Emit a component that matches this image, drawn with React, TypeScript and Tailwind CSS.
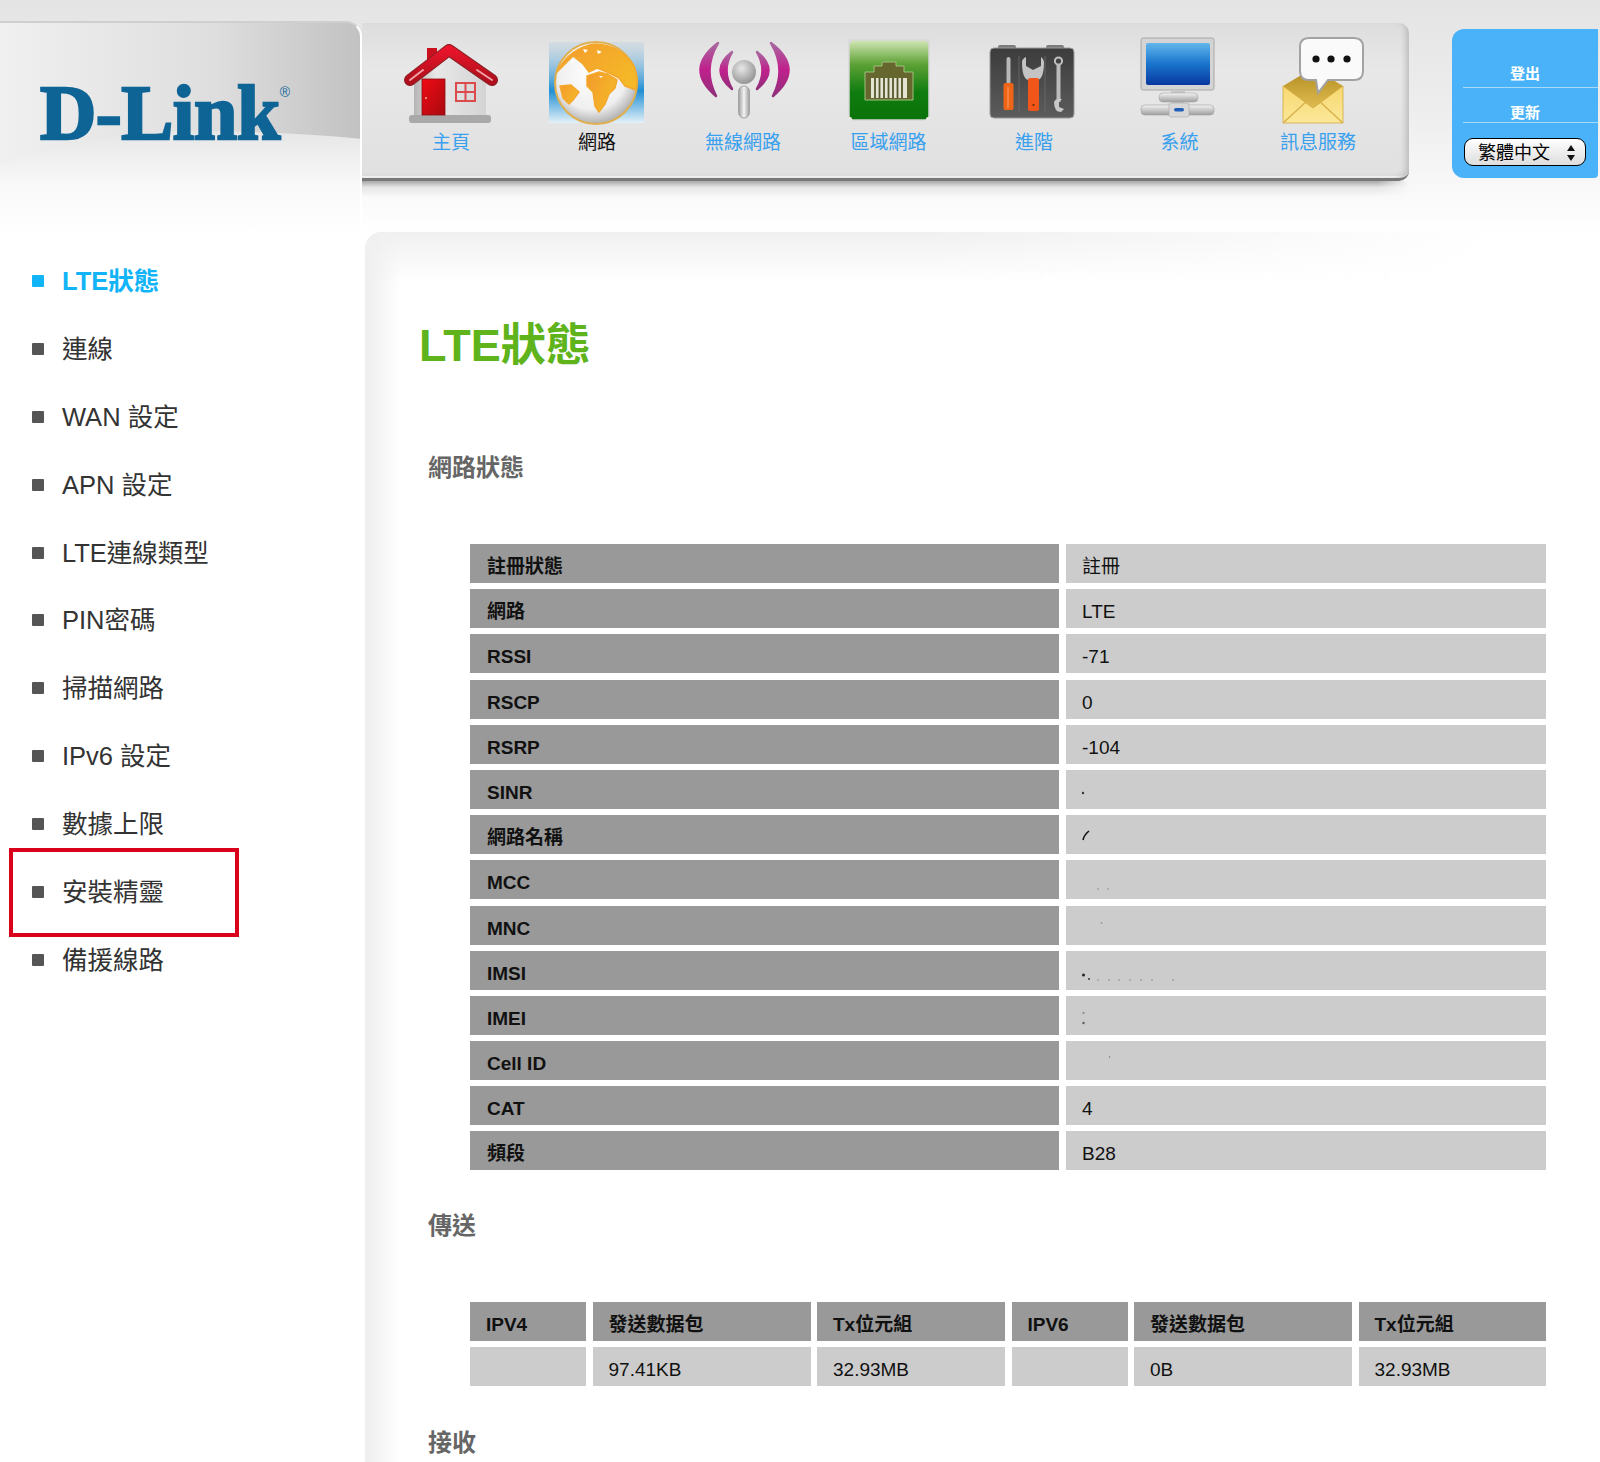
const navItems = [
  { label: "主頁", width: "w-[146px]", icon: <HomeIcon /> },
  { label: "網路", width: "w-[146px]", icon: <GlobeIcon />, active: true },
  { label: "無線網路", width: "w-[146px]", icon: <WirelessIcon /> },
  { label: "區域網路", width: "w-[145px]", icon: <LanIcon /> },
  { label: "進階", width: "w-[146px]", icon: <ToolsIcon /> },
  { label: "系統", width: "w-[145px]", icon: <MonitorIcon /> },
  { label: "訊息服務", width: "w-[132px]", icon: <MessageIcon /> },
];

const sideItems = [
  "LTE狀態",
  "連線",
  "WAN 設定",
  "APN 設定",
  "LTE連線類型",
  "PIN密碼",
  "掃描網路",
  "IPv6 設定",
  "數據上限",
  "安裝精靈",
  "備援線路",
];

// marks are the leftovers of the blurred values: x, y, radius, opacity
type Mark = [number, number, number, number];

const statusRows: { name: string; value?: string; marks?: Mark[]; slash?: boolean }[] = [
  { name: "註冊狀態", value: "註冊" },
  { name: "網路", value: "LTE" },
  { name: "RSSI", value: "-71" },
  { name: "RSCP", value: "0" },
  { name: "RSRP", value: "-104" },
  { name: "SINR", marks: [[17, 23, 1.2, 0.8]] },
  { name: "網路名稱", slash: true },
  { name: "MCC", marks: [[32, 29, 1, 0.2], [42, 29, 1, 0.2]] },
  { name: "MNC", marks: [[35.5, 17, 0.8, 0.4]] },
  {
    name: "IMSI",
    marks: [
      [17.5, 24, 1.5, 0.9],
      [23, 28, 1, 0.8],
      [32, 29, 1, 0.2],
      [43, 29, 1, 0.2],
      [53, 29, 1, 0.2],
      [64, 29, 1, 0.2],
      [75, 29, 1, 0.2],
      [86, 29, 1, 0.2],
      [107, 29, 1, 0.2],
    ],
  },
  { name: "IMEI", marks: [[17.5, 17, 1, 0.4], [17.5, 27, 1.2, 0.6]] },
  { name: "Cell ID", marks: [[43.6, 16, 0.7, 0.5]] },
  { name: "CAT", value: "4" },
  { name: "頻段", value: "B28" },
];

const sendHead = ["IPV4", "發送數据包", "Tx位元組", "IPV6", "發送數据包", "Tx位元組"];
const sendRow = ["", "97.41KB", "32.93MB", "", "0B", "32.93MB"];

function HomeIcon() {
  return (
    <svg className="blur-[0.4px]" width="100" height="90" viewBox="0 0 100 90">
      <defs>
        <linearGradient id="wall" x1="0" y1="0" x2="1" y2="0">
          <stop offset="0" stopColor="#b4b4b4" />
          <stop offset="0.3" stopColor="#e8e8e8" />
          <stop offset="1" stopColor="#d4d4d4" />
        </linearGradient>
        <linearGradient id="roof" x1="0" y1="0" x2="0" y2="1">
          <stop offset="0" stopColor="#e8142a" />
          <stop offset="1" stopColor="#b0101c" />
        </linearGradient>
        <linearGradient id="door" x1="0" y1="0" x2="1" y2="1">
          <stop offset="0" stopColor="#f00a14" />
          <stop offset="1" stopColor="#a80a10" />
        </linearGradient>
      </defs>
      <path d="M13 44 L48 14 L85 44 V82 H13 Z" fill="url(#wall)" />
      <rect x="26" y="12" width="10" height="16" fill="#c8101e" />
      <rect x="8" y="79" width="82" height="8" rx="3" fill="#a9a9a9" />
      <path d="M9 44 L48 14 L91 44" fill="none" stroke="#8c2026" strokeWidth="12" strokeLinecap="round" strokeLinejoin="round" />
      <path d="M9 44 L48 14 L91 44" fill="none" stroke="url(#roof)" strokeWidth="10" strokeLinecap="round" strokeLinejoin="round" />
      <path d="M9 44 L22 34 M76 34 L91 44" stroke="#f0a0a4" strokeWidth="2" strokeLinecap="round" />
      <rect x="21" y="43" width="23" height="36" fill="url(#door)" stroke="#8c0e14" strokeWidth="0.8" />
      <circle cx="25" cy="62" r="1" fill="#f6b0a0" />
      <rect x="55" y="47" width="19" height="18" fill="none" stroke="#dc4a4e" strokeWidth="2" />
      <path d="M64.5 47 V65 M55 56 H74" stroke="#dc4a4e" strokeWidth="2" />
    </svg>
  );
}

function GlobeIcon() {
  return (
    <svg className="blur-[0.5px]" width="100" height="90" viewBox="0 0 100 90">
      <defs>
        <linearGradient id="glow" x1="0" y1="0" x2="0" y2="1">
          <stop offset="0" stopColor="#9cc4e0" stopOpacity="0.2" />
          <stop offset="0.6" stopColor="#1f8fd4" />
          <stop offset="1" stopColor="#e4f1f8" />
        </linearGradient>
        <radialGradient id="ball" cx="0.45" cy="0.4" r="0.65">
          <stop offset="0" stopColor="#ffffff" />
          <stop offset="0.65" stopColor="#efefef" />
          <stop offset="1" stopColor="#a0a0a0" />
        </radialGradient>
        <linearGradient id="land" x1="0" y1="0" x2="1" y2="0.6">
          <stop offset="0" stopColor="#f39a2c" />
          <stop offset="1" stopColor="#f5b828" />
        </linearGradient>
      </defs>
      <rect x="2" y="6" width="95" height="81" fill="url(#glow)" />
      <circle cx="49" cy="47" r="41" fill="url(#ball)" stroke="#e0b050" strokeWidth="2" />
      <g fill="url(#land)" stroke="#f5a82c" strokeWidth="1.5" strokeLinejoin="round">
        <path d="M10 36 Q22 12 48 8 Q74 9 87 30 Q92 44 89 54 L78 50 L72 42 L60 36 L50 32 L42 36 L36 28 L26 20 L16 30 Z" />
        <path d="M40 40 L52 36 L60 38 L70 44 L68 52 L62 58 L58 68 L52 76 L48 70 L46 56 L40 50 Z" />
        <path d="M13 50 L24 49 L32 56 L26 64 L22 68 L16 62 Z" />
      </g>
      <path d="M36 13 l5 1 l-3 3 Z M24 24 l4 1 l-3 3 Z M50 14 l5 2 l-4 2 Z M52 40 l4 0 l-2 2 Z" fill="#fff" />
    </svg>
  );
}

function WirelessIcon() {
  return (
    <svg className="blur-[0.4px]" width="100" height="90" viewBox="0 0 100 90">
      <defs>
        <radialGradient id="bulb" cx="0.4" cy="0.35" r="0.7">
          <stop offset="0" stopColor="#e8e8e8" />
          <stop offset="1" stopColor="#8f8f8f" />
        </radialGradient>
        <linearGradient id="stem" x1="0" y1="0" x2="1" y2="0">
          <stop offset="0" stopColor="#9a9a9a" />
          <stop offset="0.5" stopColor="#f4f4f4" />
          <stop offset="1" stopColor="#9a9a9a" />
        </linearGradient>
        <linearGradient id="wave" x1="0" y1="0" x2="0" y2="1">
          <stop offset="0" stopColor="#a86aa0" />
          <stop offset="0.5" stopColor="#c0208c" />
          <stop offset="1" stopColor="#90307a" />
        </linearGradient>
      </defs>
      <g fill="url(#wave)" stroke="url(#wave)" strokeWidth="2.5" strokeLinejoin="round">
        <path d="M25 7 Q-9 33 23 60 Q9 33 25 7 Z" />
        <path d="M78 7 Q112 33 80 60 Q94 33 78 7 Z" />
        <path d="M39 16 Q16 34 39 53 Q28 34 39 16 Z" />
        <path d="M64 16 Q87 34 64 53 Q75 34 64 16 Z" />
      </g>
      <circle cx="51" cy="36" r="12" fill="url(#bulb)" />
      <rect x="45.5" y="50" width="11" height="32" rx="5.5" fill="url(#stem)" stroke="#a4a4a4" />
    </svg>
  );
}

function LanIcon() {
  return (
    <svg className="blur-[0.4px]" width="100" height="90" viewBox="0 0 100 90">
      <defs>
        <linearGradient id="lanBg" x1="0" y1="0" x2="0" y2="1">
          <stop offset="0" stopColor="#d4e8b8" />
          <stop offset="0.3" stopColor="#5ea236" />
          <stop offset="0.65" stopColor="#0f7c10" />
          <stop offset="1" stopColor="#0a7208" />
        </linearGradient>
      </defs>
      <rect x="10" y="4" width="80" height="80" rx="4" fill="url(#lanBg)" stroke="#d8d8d8" strokeWidth="1.5" />
      <path d="M26 64 V36 H35 V30 H43 V26 H57 V30 H65 V36 H74 V64 Z" fill="#66672e" stroke="#9fc27c" strokeWidth="1" />
      <rect x="32" y="42" width="36" height="20" fill="#e4e4d2" />
      <path d="M36 42 V62 M40.5 42 V62 M45 42 V62 M49.5 42 V62 M54 42 V62 M58.5 42 V62 M63 42 V62" stroke="#55562a" strokeWidth="1.8" />
      <circle cx="11" cy="5" r="2" fill="#d8d8d8" />
      <circle cx="89" cy="5" r="2" fill="#d8d8d8" />
      <circle cx="11" cy="83" r="2" fill="#e8e8e8" />
      <circle cx="89" cy="83" r="2" fill="#e8e8e8" />
    </svg>
  );
}

function ToolsIcon() {
  return (
    <svg className="blur-[0.4px]" width="100" height="90" viewBox="0 0 100 90">
      <defs>
        <linearGradient id="case" x1="0" y1="0" x2="0" y2="1">
          <stop offset="0" stopColor="#3c3c3c" />
          <stop offset="1" stopColor="#5c5c5c" />
        </linearGradient>
      </defs>
      <rect x="14" y="9" width="18" height="5" rx="2" fill="#7c7c7c" />
      <rect x="62" y="9" width="18" height="5" rx="2" fill="#7c7c7c" />
      <rect x="6" y="12" width="84" height="70" rx="4" fill="url(#case)" stroke="#9a9a9a" strokeWidth="1" />
      <path d="M35 20 V76 M61 20 V76" stroke="#6c6c6c" strokeWidth="0.8" />
      <rect x="22.5" y="21" width="4" height="27" rx="2" fill="#b8b8b8" />
      <rect x="19.5" y="47" width="10" height="27" rx="2" fill="#f06418" />
      <path d="M24 51 V72" stroke="#ffa060" strokeWidth="1" />
      <path d="M38 26 Q38 42 44 44 H54 Q60 42 60 26 Q60 23 57 21 V30 L49 34 L42 30 V21 Q38 23 38 26 Z" fill="#c4c4c4" />
      <rect x="44" y="42" width="11" height="33" rx="2" fill="#f0561a" />
      <circle cx="49.5" cy="69" r="1" fill="#5a2608" />
      <circle cx="74.5" cy="25" r="3.6" fill="none" stroke="#c0c0c0" strokeWidth="2" />
      <rect x="72.5" y="28" width="4" height="38" fill="#bcbcbc" />
      <path d="M70 66 Q70 76 77 76 L80 73 L75 71 L75 66 L78 63 Q72 62 70 66 Z" fill="#c8c8c8" />
    </svg>
  );
}

function MonitorIcon() {
  return (
    <svg className="blur-[0.4px]" width="100" height="90" viewBox="0 0 100 90">
      <defs>
        <linearGradient id="screen" x1="0" y1="0" x2="0" y2="1">
          <stop offset="0" stopColor="#62b6ec" />
          <stop offset="0.5" stopColor="#1a74cc" />
          <stop offset="1" stopColor="#0838a0" />
        </linearGradient>
        <linearGradient id="metal" x1="0" y1="0" x2="0" y2="1">
          <stop offset="0" stopColor="#f4f4f4" />
          <stop offset="1" stopColor="#9e9e9e" />
        </linearGradient>
      </defs>
      <rect x="11" y="2" width="73" height="52" rx="2" fill="#d4d4d4" stroke="#a8a8a8" />
      <rect x="16" y="7" width="64" height="42" rx="2" fill="url(#screen)" />
      <rect x="41" y="54" width="14" height="4" fill="#c8c8c8" />
      <rect x="29" y="57" width="39" height="9" rx="4" fill="url(#metal)" stroke="#a8a8a8" strokeWidth="0.6" />
      <rect x="42" y="66" width="12" height="4" fill="#bbb" />
      <rect x="11" y="69" width="73" height="10" rx="4" fill="url(#metal)" stroke="#a0a0a0" strokeWidth="0.6" />
      <rect x="39" y="67" width="20" height="14" rx="2" fill="#d8d8d8" stroke="#a8a8a8" strokeWidth="0.6" />
      <rect x="44" y="72" width="10" height="3.5" rx="1.7" fill="#1f5fb8" />
    </svg>
  );
}

function MessageIcon() {
  return (
    <svg className="blur-[0.4px]" width="100" height="90" viewBox="0 0 100 90">
      <defs>
        <linearGradient id="flap" x1="0" y1="0" x2="0" y2="1">
          <stop offset="0" stopColor="#b08a20" />
          <stop offset="1" stopColor="#f2cf62" />
        </linearGradient>
        <linearGradient id="env" x1="0" y1="0" x2="0" y2="1">
          <stop offset="0" stopColor="#f8d870" />
          <stop offset="1" stopColor="#fbe89a" />
        </linearGradient>
      </defs>
      <path d="M15 50 L45 32 L75 50 V87 H15 Z" fill="url(#flap)" />
      <path d="M15 50 L45 72 L75 50 V87 H15 Z" fill="url(#env)" stroke="#d2aa40" strokeWidth="0.8" />
      <path d="M15 87 L40 64 M75 87 L50 64" stroke="#d8b24c" strokeWidth="1.5" />
      <path d="M41 2 H86 Q95 2 95 11 V35 Q95 44 86 44 H60 L50 57 L48 44 H41 Q32 44 32 35 V11 Q32 2 41 2 Z" fill="#fafafa" stroke="#a2a2a2" strokeWidth="2" />
      <circle cx="48" cy="23" r="3.6" fill="#111" />
      <circle cx="63" cy="23" r="3.6" fill="#111" />
      <circle cx="79" cy="23" r="3.6" fill="#111" />
    </svg>
  );
}

function Logo() {
  return (
    <div className="relative z-10 ml-[40px] flex items-start pt-[51px] font-['Liberation_Serif','DejaVu_Serif',serif] text-[78px] leading-[78px] font-bold tracking-[-0.5px] text-[#0f6496] [-webkit-text-stroke:2.4px_#0f6496]">
      <span>D-Link</span>
      <span className="mt-[10px] font-['Liberation_Sans',sans-serif] text-[14px] leading-[16px] font-normal tracking-normal [-webkit-text-stroke:0px]">
        ®
      </span>
    </div>
  );
}

export default function App() {
  return (
    <div className="h-[1462px] w-[1600px] overflow-hidden bg-white font-['Liberation_Sans','Noto_Sans_CJK_TC',sans-serif]">
      <header className="flex h-[232px] bg-gradient-to-b from-[#e4e4e4] via-[#eeeeee] via-50% to-white">
        <div className="relative mt-[21px] h-[211px] w-[362px] overflow-hidden rounded-tr-[16px] border-t-2 border-r-2 border-t-[#cfcfcf] border-r-white bg-gradient-to-r from-[#f0f0f0] via-[#dedede] via-60% to-[#c2c2c2]">
          <svg className="absolute inset-0" width="362" height="211" viewBox="0 0 362 211">
            <defs>
              <linearGradient id="swoosh" x1="0" y1="0" x2="0" y2="1">
                <stop offset="0" stopColor="#e6e6e6" />
                <stop offset="0.5" stopColor="#f8f8f8" />
                <stop offset="1" stopColor="#ffffff" />
              </linearGradient>
            </defs>
            <path d="M0 142 Q110 104 220 108 Q300 110 362 116 V211 H0 Z" fill="url(#swoosh)" />
          </svg>
          <Logo />
        </div>

        <div className="w-[1047px]">
          <nav className="mt-[23px] flex h-[158px] rounded-r-[10px] border-b-[3px] border-b-[#787878] bg-gradient-to-b from-[#dddddd] via-[#e8e8e8] via-30% to-[#e0e0e0] pl-[16px] pt-[13px] shadow-[inset_-6px_-2px_6px_-3px_#bbbbbb,inset_0_-2px_0_#ffffff]">
            {navItems.map((item) => (
              <div key={item.label} className={`flex flex-col items-center ${item.width}`}>
                {item.icon}
                <span
                  className={`mt-[5px] text-[19px] leading-[24px] ${item.active ? "text-[#111111]" : "text-[#38a0ee]"}`}
                >
                  {item.label}
                </span>
              </div>
            ))}
          </nav>
          <div className="h-[16px] bg-gradient-to-b from-[#a8a8a8] via-[#e6e6e6] via-40% to-transparent [mask-image:linear-gradient(to_right,black_97%,transparent)]" />
        </div>

        <div className="ml-[43px] mt-[29px] flex h-[149px] w-[146px] flex-col rounded-l-[12px] rounded-br-[4px] bg-[#4ab2f8] pt-[35px] text-white">
          <div className="ml-[11px] h-[24px] border-b border-b-[#a8daf8] pr-[11px] text-center text-[15px] leading-[20px] font-bold">
            登出
          </div>
          <div className="ml-[11px] mt-[17px] h-[18px] border-b border-b-[#a8daf8] pr-[11px] text-center text-[15px] leading-[16px] font-bold">
            更新
          </div>
          <div className="ml-[12px] mt-[15px] flex h-[28px] w-[122px] items-center justify-between rounded-[9px] border-[1.5px] border-black bg-gradient-to-b from-white to-[#dddddd] pl-[13px] pr-[10px] pt-[1px] text-[18px] leading-[24px] text-black">
            繁體中文
            <svg width="8" height="16" viewBox="0 0 8 16">
              <path d="M4 0 L8 6 H0 Z M4 16 L0 10 H8 Z" fill="#111111" />
            </svg>
          </div>
        </div>
      </header>

      <div className="flex">
        <aside className="w-[365px] pt-[15px]">
          {sideItems.map((item, i) => (
            <div key={item} className="relative flex h-[67.9px] items-center pl-[32px]">
              <span className={`h-[12px] w-[12px] rounded-[1px] blur-[0.4px] ${i === 0 ? "bg-[#12b4f8]" : "bg-[#555555]"}`} />
              <span
                className={`ml-[18px] text-[25.5px] leading-[32px] ${i === 0 ? "font-bold text-[#12b4f8]" : "text-[#333333]"}`}
              >
                {item}
              </span>
              {item === "安裝精靈" && (
                <span className="absolute left-[9px] top-[-10px] h-[89px] w-[230px] border-4 border-[#d9001b]" />
              )}
            </div>
          ))}
        </aside>

        <main className="relative h-[1230px] w-[1235px] rounded-tl-[16px] pl-[54px] pt-[86px]">
          <div className="absolute inset-y-0 left-0 w-[36px] rounded-tl-[16px] bg-gradient-to-r from-[#eeeeee] to-white" />
          <div className="absolute left-0 right-[100px] top-0 h-[50px] rounded-tl-[16px] bg-gradient-to-b from-[#f0f0f0] to-transparent [mask-image:linear-gradient(to_right,black_50%,transparent)]" />
          <h1 className="relative text-[45px] leading-[56px] font-bold text-[#5fb31b]">LTE狀態</h1>
          <h2 className="relative ml-[9px] mt-[78px] text-[24px] leading-[32px] font-bold text-[#666666]">網路狀態</h2>

          <div className="relative ml-[51px] mt-[60px] grid grid-cols-[589px_480px] auto-rows-[39px] gap-x-[7px] gap-y-[6.2px] text-[19px] leading-[24px] text-[#111111]">
            {statusRows.map((row) => (
              <div key={row.name} className="contents">
                <div className="flex items-center bg-[#999999] pl-[17px] pt-[7px] font-bold">{row.name}</div>
                <div className="relative flex items-center bg-[#cccccc] pl-[16px] pt-[7px]">
                  {row.value}
                  {(row.marks || row.slash) && (
                    <svg className="absolute left-0 top-0" width="120" height="39" viewBox="0 0 120 39">
                      {row.marks?.map(([x, y, r, o]) => (
                        <circle key={`${x}-${y}`} cx={x} cy={y} r={r} fill="#111111" opacity={o} />
                      ))}
                      {row.slash && <path d="M23 16 Q18 20 17 25" fill="none" stroke="#111111" strokeWidth="1.6" />}
                    </svg>
                  )}
                </div>
              </div>
            ))}
          </div>

          <h2 className="relative ml-[9px] mt-[40px] text-[24px] leading-[32px] font-bold text-[#666666]">傳送</h2>

          <div className="relative ml-[51px] mt-[60px] grid grid-cols-[116px_218px_188px_116px_218px_187px] auto-rows-[39px] gap-x-[6.5px] gap-y-[6px] text-[19px] leading-[24px] text-[#111111]">
            {sendHead.map((cell, i) => (
              <div key={i} className="flex items-center bg-[#999999] pl-[16px] pt-[7px] font-bold">
                {cell}
              </div>
            ))}
            {sendRow.map((cell, i) => (
              <div key={i} className="flex items-center bg-[#cccccc] pl-[16px] pt-[7px]">
                {cell}
              </div>
            ))}
          </div>

          <h2 className="relative ml-[9px] mt-[41px] text-[24px] leading-[32px] font-bold text-[#666666]">接收</h2>
        </main>
      </div>
    </div>
  );
}
